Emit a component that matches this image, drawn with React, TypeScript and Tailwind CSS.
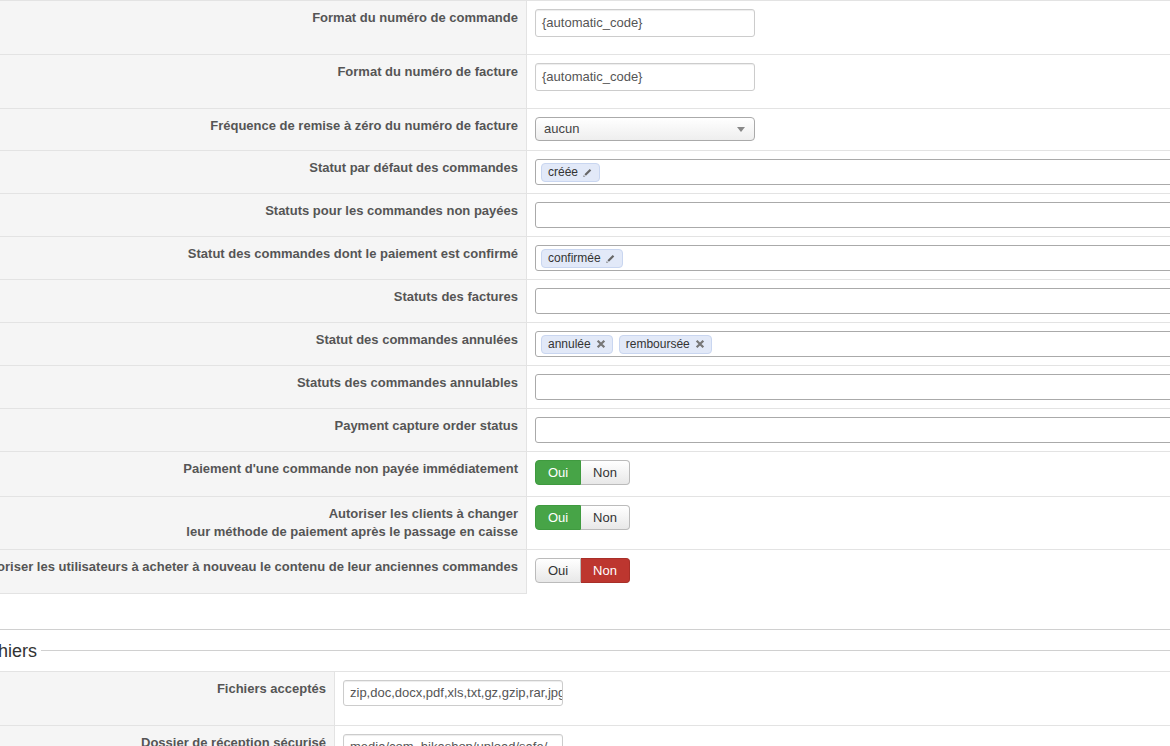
import React from "react";

const font = { fontFamily: '"Liberation Sans", Arial, sans-serif' };

type RowProps = {
  label: React.ReactNode;
  h: string;
  labelW?: string;
  last?: boolean;
  children?: React.ReactNode;
};

const Row: React.FC<RowProps> = ({ label, h, labelW = "w-[567px]", last, children }) => (
  <div className={`flex border-t border-[#e3e3e3] ${h}`}>
    <div
      className={`${labelW} shrink-0 bg-[#f5f5f5] border-r border-[#e3e3e3] pr-2 pt-2 text-right text-[13px] font-bold leading-[18px] text-[#555] whitespace-nowrap ${
        last ? "border-b" : ""
      }`}
    >
      {label}
    </div>
    <div className="flex-1 pl-2 pt-2">{children}</div>
  </div>
);

const TextInput = ({ value, w = "w-[220px]", h = "h-[28px]" }: { value: string; w?: string; h?: string }) => (
  <div
    className={`${w} ${h} flex items-center overflow-hidden whitespace-nowrap rounded-[3px] border border-[#ccc] bg-white px-[6px] text-[13px] text-[#555] shadow-[inset_0_1px_1px_rgba(0,0,0,0.075)]`}
  >
    {value}
  </div>
);

const Pencil = () => (
  <svg width="11" height="11" viewBox="0 0 10 10" className="ml-[4px]">
    <path d="M2.2 6.6 L7 1.8 L8.4 3.2 L3.6 8 Z" fill="#666" />
    <path d="M1.6 7.2 L3 8.6 L1 9.2 Z" fill="#888" />
  </svg>
);

const Cross = () => (
  <svg width="10" height="10" viewBox="0 0 9 9" className="ml-[5px]">
    <path d="M1.5 1.5 L7.5 7.5 M7.5 1.5 L1.5 7.5" stroke="#777" strokeWidth="2" />
  </svg>
);

const Tag = ({ text, icon }: { text: string; icon: "edit" | "x" }) => (
  <span className="mr-[6px] inline-flex h-[19px] items-center rounded-[4px] border border-[#c9d6f0] bg-[#e2e9f8] px-[6px] text-[12px] text-[#333]">
    {text}
    {icon === "edit" ? <Pencil /> : <Cross />}
  </span>
);

const TagInput = ({ children }: { children?: React.ReactNode }) => (
  <div className="flex h-[26px] w-[720px] items-center rounded-[3px] border border-[#aaa] bg-white px-[5px]">
    {children}
  </div>
);

const Toggle = ({ yes }: { yes: boolean }) => (
  <div className="flex h-[25px] w-[95px] text-[13px]">
    <div
      className={`flex w-[46px] items-center justify-center rounded-l-[4px] border ${
        yes
          ? "border-[#3f9a3f] bg-[#47a447] text-white"
          : "border-[#bbb] bg-gradient-to-b from-white to-[#e8e8e8] text-[#333]"
      }`}
    >
      Oui
    </div>
    <div
      className={`flex flex-1 items-center justify-center rounded-r-[4px] border border-l-0 ${
        yes
          ? "border-[#bbb] bg-gradient-to-b from-white to-[#e8e8e8] text-[#333]"
          : "border-[#a82f28] bg-[#bd362f] text-white"
      }`}
    >
      Non
    </div>
  </div>
);

export default function App() {
  return (
    <div className="h-[746px] w-[1170px] overflow-hidden bg-white" style={font}>
      <div className="-ml-[40px] w-[1250px]">
        <Row label="Format du numéro de commande" h="h-[54px]">
          <TextInput value="{automatic_code}" />
        </Row>
        <Row label="Format du numéro de facture" h="h-[54px]">
          <TextInput value="{automatic_code}" />
        </Row>
        <Row label="Fréquence de remise à zéro du numéro de facture" h="h-[42px]">
          <div className="flex h-[24px] w-[220px] items-center justify-between rounded-[4px] border border-[#aaa] bg-gradient-to-b from-white to-[#eeeeee] pl-[8px] pr-[9px] text-[13px] text-[#444]">
            <span>aucun</span>
            <svg width="8" height="5" viewBox="0 0 8 5">
              <path d="M0 0 H8 L4 5 Z" fill="#888" />
            </svg>
          </div>
        </Row>
        <Row label="Statut par défaut des commandes" h="h-[43px]">
          <TagInput>
            <Tag text="créée" icon="edit" />
          </TagInput>
        </Row>
        <Row label="Statuts pour les commandes non payées" h="h-[43px]">
          <TagInput />
        </Row>
        <Row label="Statut des commandes dont le paiement est confirmé" h="h-[43px]">
          <TagInput>
            <Tag text="confirmée" icon="edit" />
          </TagInput>
        </Row>
        <Row label="Statuts des factures" h="h-[43px]">
          <TagInput />
        </Row>
        <Row label="Statut des commandes annulées" h="h-[43px]">
          <TagInput>
            <Tag text="annulée" icon="x" />
            <Tag text="remboursée" icon="x" />
          </TagInput>
        </Row>
        <Row label="Statuts des commandes annulables" h="h-[43px]">
          <TagInput />
        </Row>
        <Row label="Payment capture order status" h="h-[43px]">
          <TagInput />
        </Row>
        <Row label="Paiement d'une commande non payée immédiatement" h="h-[45px]">
          <Toggle yes />
        </Row>
        <Row
          label={
            <>
              Autoriser les clients à changer
              <br />
              leur méthode de paiement après le passage en caisse
            </>
          }
          h="h-[53px]"
        >
          <Toggle yes />
        </Row>
        <Row
          label="Autoriser les utilisateurs à acheter à nouveau le contenu de leur anciennes commandes"
          h="h-[45px]"
          last
        >
          <Toggle yes={false} />
        </Row>

        <div className="h-[35px]" />
        <div className="border-t border-[#d0d0d0]" />
        <div className="flex h-[41px] items-center pl-[14px]">
          <span className="text-[18px] leading-none text-[#333]">Fichiers</span>
          <div className="ml-[4px] h-px flex-1 bg-[#d0d0d0]" />
        </div>

        <Row label="Fichiers acceptés" h="h-[54px]" labelW="w-[375px]">
          <TextInput value="zip,doc,docx,pdf,xls,txt,gz,gzip,rar,jpg,png" h="h-[26px]" />
        </Row>
        <Row label="Dossier de réception sécurisé" h="h-[54px]" labelW="w-[375px]">
          <TextInput value="media/com_hikashop/upload/safe/" h="h-[26px]" />
        </Row>
      </div>
    </div>
  );
}
